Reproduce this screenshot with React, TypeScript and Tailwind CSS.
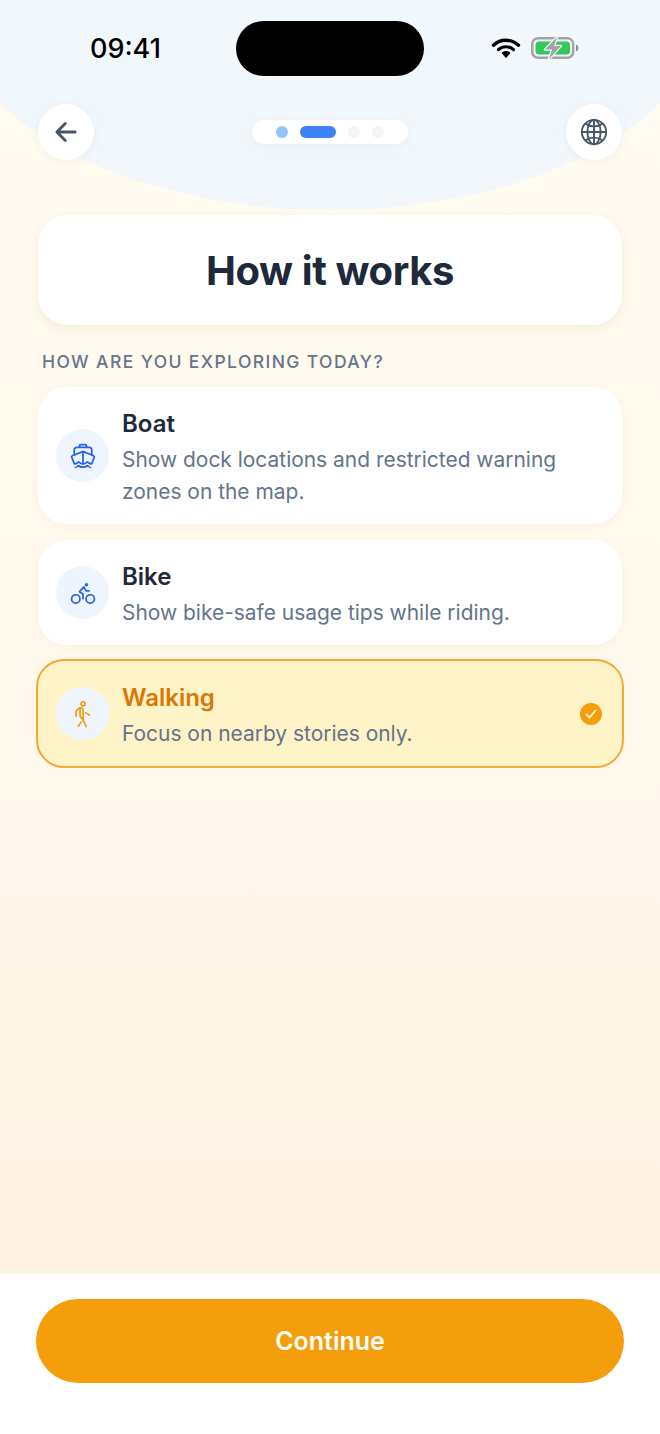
import { ReactNode } from 'react'
import { IoArrowBack, IoGlobeOutline, IoBoatOutline, IoBicycleOutline, IoWalkOutline } from 'react-icons/io5'

function WifiIcon() {
  return (
    <svg width="30" height="22" viewBox="0 0 30 22" fill="none">
      <path d="M2.5 8.2C9.5 1.6 20.5 1.6 27.5 8.2" stroke="#000" strokeWidth="3.4" strokeLinecap="round" />
      <path d="M7.5 12.6C11.7 8.8 18.3 8.8 22.5 12.6" stroke="#000" strokeWidth="3.2" strokeLinecap="round" />
      <path d="M11 16C13.2 14 16.8 14 19 16L15 20.5Z" fill="#000" stroke="#000" strokeWidth="1" strokeLinejoin="round" />
    </svg>
  )
}

function BatteryIcon() {
  return (
    <svg width="48" height="24" viewBox="0 0 48 24" fill="none">
      <rect x="1.2" y="2.2" width="41" height="19.6" rx="6" stroke="#a3a3a3" strokeWidth="2.4" />
      <rect x="4.5" y="5.5" width="34.5" height="13" rx="3.5" fill="#34c759" />
      <path d="M45 8.5c1.6.6 2.4 1.9 2.4 3.5s-.8 2.9-2.4 3.5z" fill="#8e8e8e" />
      <path
        d="M26 1 14 13.5h7L18 23 30 10h-7z"
        fill="#a3a3a3"
        stroke="#f2f7fb"
        strokeWidth="2.5"
        strokeLinejoin="round"
        paintOrder="stroke"
      />
    </svg>
  )
}

interface OptionCardProps {
  icon: ReactNode
  title: string
  description: string
  selected?: boolean
  className?: string
}

function OptionCard({ icon, title, description, selected = false, className = '' }: OptionCardProps) {
  return (
    <div
      className={`flex items-center rounded-[28px] ${
        selected
          ? 'mx-[-2px] border-2 border-[#f1aa35] bg-[#fef2c7] pl-[18px] pr-[20px]'
          : 'bg-white pl-[18px] pr-[20px] shadow-[0_2px_8px_rgba(148,113,60,0.06)]'
      } ${className}`}
    >
      <div className="flex h-[53px] w-[53px] shrink-0 items-center justify-center rounded-full bg-[#eff5ff]">
        {icon}
      </div>
      <div className="ml-[13px] min-w-0 flex-1 pt-[5px]">
        <div className={`text-[24px] leading-[32px] font-semibold ${selected ? 'text-[#d97706]' : 'text-[#1e293b]'}`}>
          {title}
        </div>
        <div className="mt-[4px] text-[20.95px] leading-[32px] text-[#64748b]">{description}</div>
      </div>
      {selected && (
        <div className="ml-2 flex h-[22px] w-[22px] shrink-0 items-center justify-center rounded-full bg-[#f59e0b]">
          <svg width="22" height="22" viewBox="0 0 22 22" fill="none">
            <path d="M6.5 11.5l3 3 6-7" stroke="#fef3c7" strokeWidth="1.9" strokeLinecap="round" strokeLinejoin="round" />
          </svg>
        </div>
      )}
    </div>
  )
}

export default function App() {
  return (
    <div className="relative flex h-[1434px] w-[660px] flex-col overflow-hidden bg-white font-['Inter',sans-serif]">
      <div className="relative flex-1 overflow-hidden bg-gradient-to-b from-[#fffcf1] via-[#fff8ec] via-60% to-[#fff3e3]">
        {/* Top blob */}
        <div className="absolute top-[-214px] left-[-50px] h-[424px] w-[760px] rounded-[50%] bg-[#f2f7fb]" />

        <div className="relative px-[38px]">
          {/* Status bar */}
          <div className="flex h-[104px] items-start">
            <div className="mt-[31px] ml-[52px] w-[146px] text-[27px] leading-[36px] font-medium text-black">09:41</div>
            <div className="mt-[21px] h-[55px] w-[188px] rounded-full bg-black" />
            <div className="mt-[36px] ml-[67px] flex items-center gap-[10px]">
              <WifiIcon />
              <BatteryIcon />
            </div>
          </div>

          {/* Nav */}
          <div className="flex h-[56px] items-center justify-between">
            <div className="flex h-[56px] w-[56px] items-center justify-center rounded-full bg-white shadow-[0_2px_8px_rgba(100,116,139,0.08)]">
              <IoArrowBack className="h-[30px] w-[30px] text-[#475569]" />
            </div>
            <div className="flex h-[24px] w-[156px] items-center justify-center gap-[12px] rounded-full bg-white shadow-[0_2px_8px_rgba(100,116,139,0.08)]">
              <span className="h-[12px] w-[12px] rounded-full bg-[#93c5fd]" />
              <span className="h-[12px] w-[36px] rounded-full bg-[#3b82f6]" />
              <span className="h-[12px] w-[12px] rounded-full bg-[#f3f4f6]" />
              <span className="h-[12px] w-[12px] rounded-full bg-[#f3f4f6]" />
            </div>
            <div className="flex h-[56px] w-[56px] items-center justify-center rounded-full bg-white shadow-[0_2px_8px_rgba(100,116,139,0.08)]">
              <IoGlobeOutline className="h-[30px] w-[30px] text-[#475569]" />
            </div>
          </div>

          {/* Title */}
          <div className="mt-[55px] flex h-[110px] items-center justify-center rounded-[30px] bg-white pt-[1px] shadow-[0_3px_12px_rgba(148,113,60,0.1)]">
            <h1 className="text-[40px] leading-[46px] font-bold tracking-[-0.4px] text-[#1e293b]">How it works</h1>
          </div>

          <div className="mt-[25px] ml-[4px] text-[17.5px] leading-[24px] font-medium tracking-[1.4px] text-[#64748b] uppercase">
            How are you exploring today?
          </div>

          <div className="mt-[13px] flex flex-col">
            <OptionCard
              className="h-[137px]"
              icon={<IoBoatOutline className="h-[28px] w-[28px] text-[#2563eb]" />}
              title="Boat"
              description="Show dock locations and restricted warning zones on the map."
            />
            <OptionCard
              className="mt-[16px] h-[105px]"
              icon={<IoBicycleOutline className="h-[28px] w-[28px] text-[#2563eb]" />}
              title="Bike"
              description="Show bike-safe usage tips while riding."
            />
            <OptionCard
              selected
              className="mt-[14px] h-[109px]"
              icon={<IoWalkOutline className="h-[28px] w-[28px] text-[#f59e0b]" />}
              title="Walking"
              description="Focus on nearby stories only."
            />
          </div>
        </div>
      </div>

      {/* Footer */}
      <div className="h-[160px] bg-white px-[36px] pt-[25px]">
        <button
          type="button"
          className="h-[84px] w-full rounded-full bg-[#f59e0b] pt-[1px] text-[25px] font-semibold text-[#fffdf5]"
        >
          Continue
        </button>
      </div>
    </div>
  )
}
